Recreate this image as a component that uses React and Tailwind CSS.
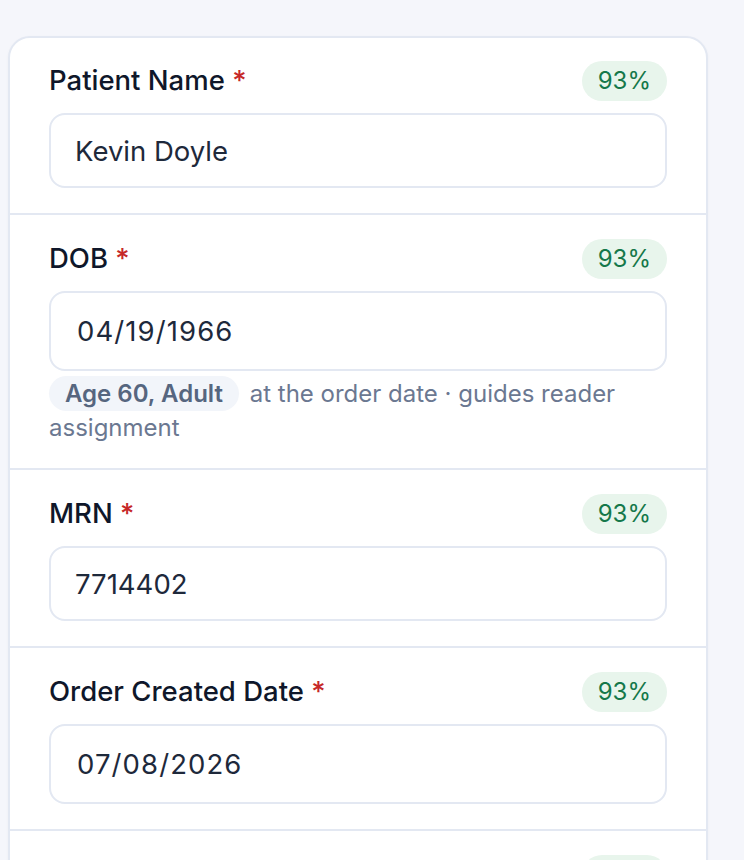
const fields = [
  { label: "Patient Name", value: "Kevin Doyle", tall: false },
  {
    label: "DOB",
    value: "04/19/1966",
    tall: true,
    hint: { tag: "Age 60, Adult", text: "at the order date · guides reader assignment" },
  },
  { label: "MRN", value: "7714402", tall: false },
  { label: "Order Created Date", value: "07/08/2026", tall: true },
  { label: "Ordering Provider", value: "", tall: false },
];

const Field = ({ field }) => (
  <div className="px-[39px] pt-[24px] first:pt-[23px] pb-[25px] border-b-2 border-[#e3e8f2] last:border-b-0">
    <div className="flex items-center justify-between h-[40px]">
      <label className="text-[27.5px] font-medium text-[#0f172a] leading-none">
        {field.label} <span className="text-[#c62828]">*</span>
      </label>
      <span className="h-[40px] px-[16px] flex items-center rounded-full bg-[#e8f5ec] text-[#15784a] text-[24px]">
        93%
      </span>
    </div>

    <input
      readOnly
      value={field.value}
      className={`mt-[12px] w-full rounded-[16px] border-2 border-[#e3e8f2] bg-white text-[27.5px] text-[#1e293b] outline-none ${
        field.tall ? "h-[80px] pl-[26px] tracking-[0.04em]" : "h-[75px] pl-[24px]"
      }`}
    />

    {field.hint && (
      <p className="mt-[5px] -mb-[2px] text-[24px] leading-[34px] text-[#6b7891]">
        <span className="inline-block px-[16px] leading-[35px] rounded-full bg-[#f2f5fa] font-semibold text-[#56667f]">
          {field.hint.tag}
        </span>{" "}
        <span className="ml-[4px]">{field.hint.text}</span>
      </p>
    )}
  </div>
);

export default function App() {
  return (
    <div
      className="min-h-screen bg-[#f5f6fb] pt-[36px] pl-[8px]"
      style={{ fontFamily: "Inter, 'Noto Sans', sans-serif" }}
    >
      <div className="w-[700px] bg-white rounded-[22px] border-2 border-[#e3e8f2] shadow-[0_1px_3px_rgba(15,23,42,0.04)] overflow-hidden">
        {fields.map((f) => (
          <Field key={f.label} field={f} />
        ))}
      </div>
    </div>
  );
}
